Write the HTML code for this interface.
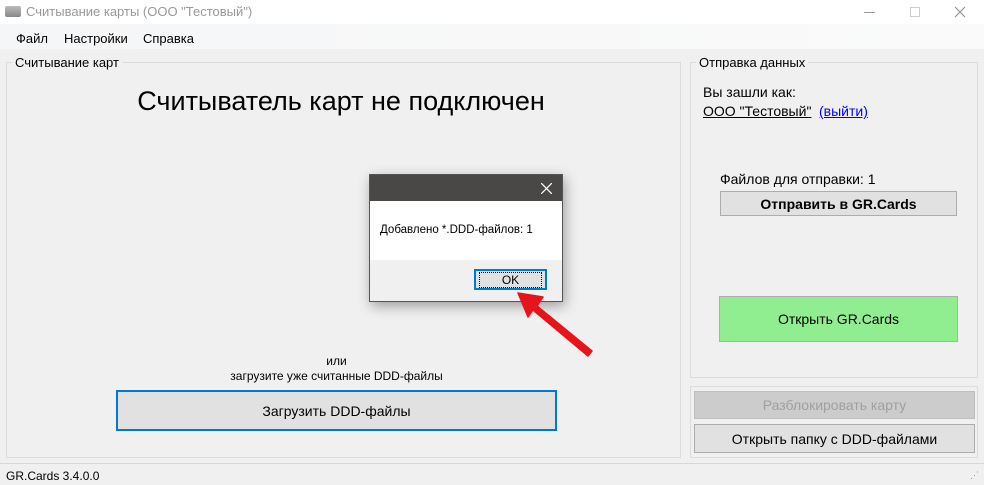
<!DOCTYPE html>
<html><head><meta charset="utf-8"><style>
*{margin:0;padding:0;box-sizing:border-box}
body{width:984px;height:485px;background:#f0f0f0;font-family:"Liberation Sans",sans-serif;font-size:13px;color:#000;position:relative;overflow:hidden}
.a{position:absolute}
.gb{position:absolute;border:1px solid #dcdcdc}
.gl{position:absolute;background:#f0f0f0;padding:0 3px;font-size:13px}
.btn{position:absolute;border:1px solid #adadad;background:#e1e1e1;display:flex;align-items:center;justify-content:center;font-size:14px}
</style></head><body>
<div class="a" style="left:0;top:0;width:984px;height:24px;background:#fff"></div>
<div class="a" style="left:5px;top:6px;width:16px;height:11px;background:linear-gradient(#bbb,#888);border-radius:2px"></div>
<div class="a" style="left:26px;top:4px;font-size:13px;color:#999">Считывание карты (ООО "Тестовый")</div>
<div class="a" style="left:864px;top:12px;width:11px;height:1px;background:#999"></div>
<div class="a" style="left:910px;top:7px;width:10px;height:10px;border:1px solid #ccc"></div>
<svg class="a" style="left:954px;top:6px" width="12" height="12"><path d="M1 1L11 11M11 1L1 11" stroke="#888" stroke-width="1"/></svg>
<div class="a" style="left:0;top:24px;width:984px;height:25px;background:linear-gradient(90deg,#f5f6f7,#fafafa)"></div>
<div class="a" style="left:16px;top:31px">Файл</div>
<div class="a" style="left:64px;top:31px">Настройки</div>
<div class="a" style="left:143px;top:31px">Справка</div>

<div class="gb" style="left:6px;top:62px;width:675px;height:396px"></div>
<div class="gl" style="left:12px;top:55px">Считывание карт</div>
<div class="a" style="left:0;top:86px;width:682px;text-align:center;font-size:27px">Считыватель карт не подключен</div>
<div class="a" style="left:116px;top:354px;width:441px;text-align:center;font-size:12px;line-height:15px">или<br>загрузите уже считанные DDD-файлы</div>
<div class="btn" style="left:116px;top:390px;width:441px;height:41px;border:2px solid #0078d7">Загрузить DDD-файлы</div>

<div class="gb" style="left:690px;top:62px;width:288px;height:316px"></div>
<div class="gl" style="left:696px;top:55px">Отправка данных</div>
<div class="a" style="left:703px;top:84px;font-size:14px">Вы зашли как:</div>
<div class="a" style="left:703px;top:103px;font-size:14px;text-decoration:underline">ООО "Тестовый"</div>
<div class="a" style="left:819px;top:103px;font-size:14px;text-decoration:underline;color:#00f">(выйти)</div>
<div class="a" style="left:720px;top:171px;font-size:14px">Файлов для отправки: 1</div>
<div class="btn" style="left:720px;top:191px;width:237px;height:25px;font-weight:bold">Отправить в GR.Cards</div>
<div class="btn" style="left:719px;top:296px;width:239px;height:46px;background:#90ee90">Открыть GR.Cards</div>

<div class="gb" style="left:690px;top:386px;width:288px;height:72px"></div>
<div class="btn" style="left:694px;top:391px;width:281px;height:28px;background:#cccccc;border-color:#bfbfbf;color:#a0a0a0">Разблокировать карту</div>
<div class="btn" style="left:694px;top:424px;width:281px;height:29px">Открыть папку с DDD-файлами</div>

<div class="a" style="left:0;top:463px;width:984px;height:1px;background:#d7d7d7"></div>
<div class="a" style="left:6px;top:469px;font-size:12px">GR.Cards 3.4.0.0</div>
<div class="a" style="left:970px;top:470px;font-size:9px;color:#999;letter-spacing:-1px">⋰</div>

<div class="a" style="left:369px;top:174px;width:194px;height:128px;border:1px solid #555;box-shadow:2px 4px 12px rgba(0,0,0,.35);background:#f0f0f0">
 <div style="height:26px;background:#4a4846;position:relative"><svg style="position:absolute;right:10px;top:8px" width="11" height="11"><path d="M0 0L11 11M11 0L0 11" stroke="#fff" stroke-width="1.3"/></svg></div>
 <div style="height:59px;background:#fff;padding:23px 0 0 10px;font-size:11.5px">Добавлено *.DDD-файлов: 1</div>
 <div class="btn" style="left:104px;top:94px;width:73px;height:21px;border:2px solid #0078d7;font-size:12px;background:#e1e1e1"><span style="outline:1px dotted #000;padding:0 22px">OK</span></div>
</div>
<svg class="a" style="left:0;top:0" width="984" height="485"><path d="M592 351 L537 306 L543 297 L518 293 L528 317 L533 310 L588 356 Z" fill="#e8141c" stroke="#e8141c" stroke-width="1.5" stroke-linejoin="round"/></svg>
</body></html>
